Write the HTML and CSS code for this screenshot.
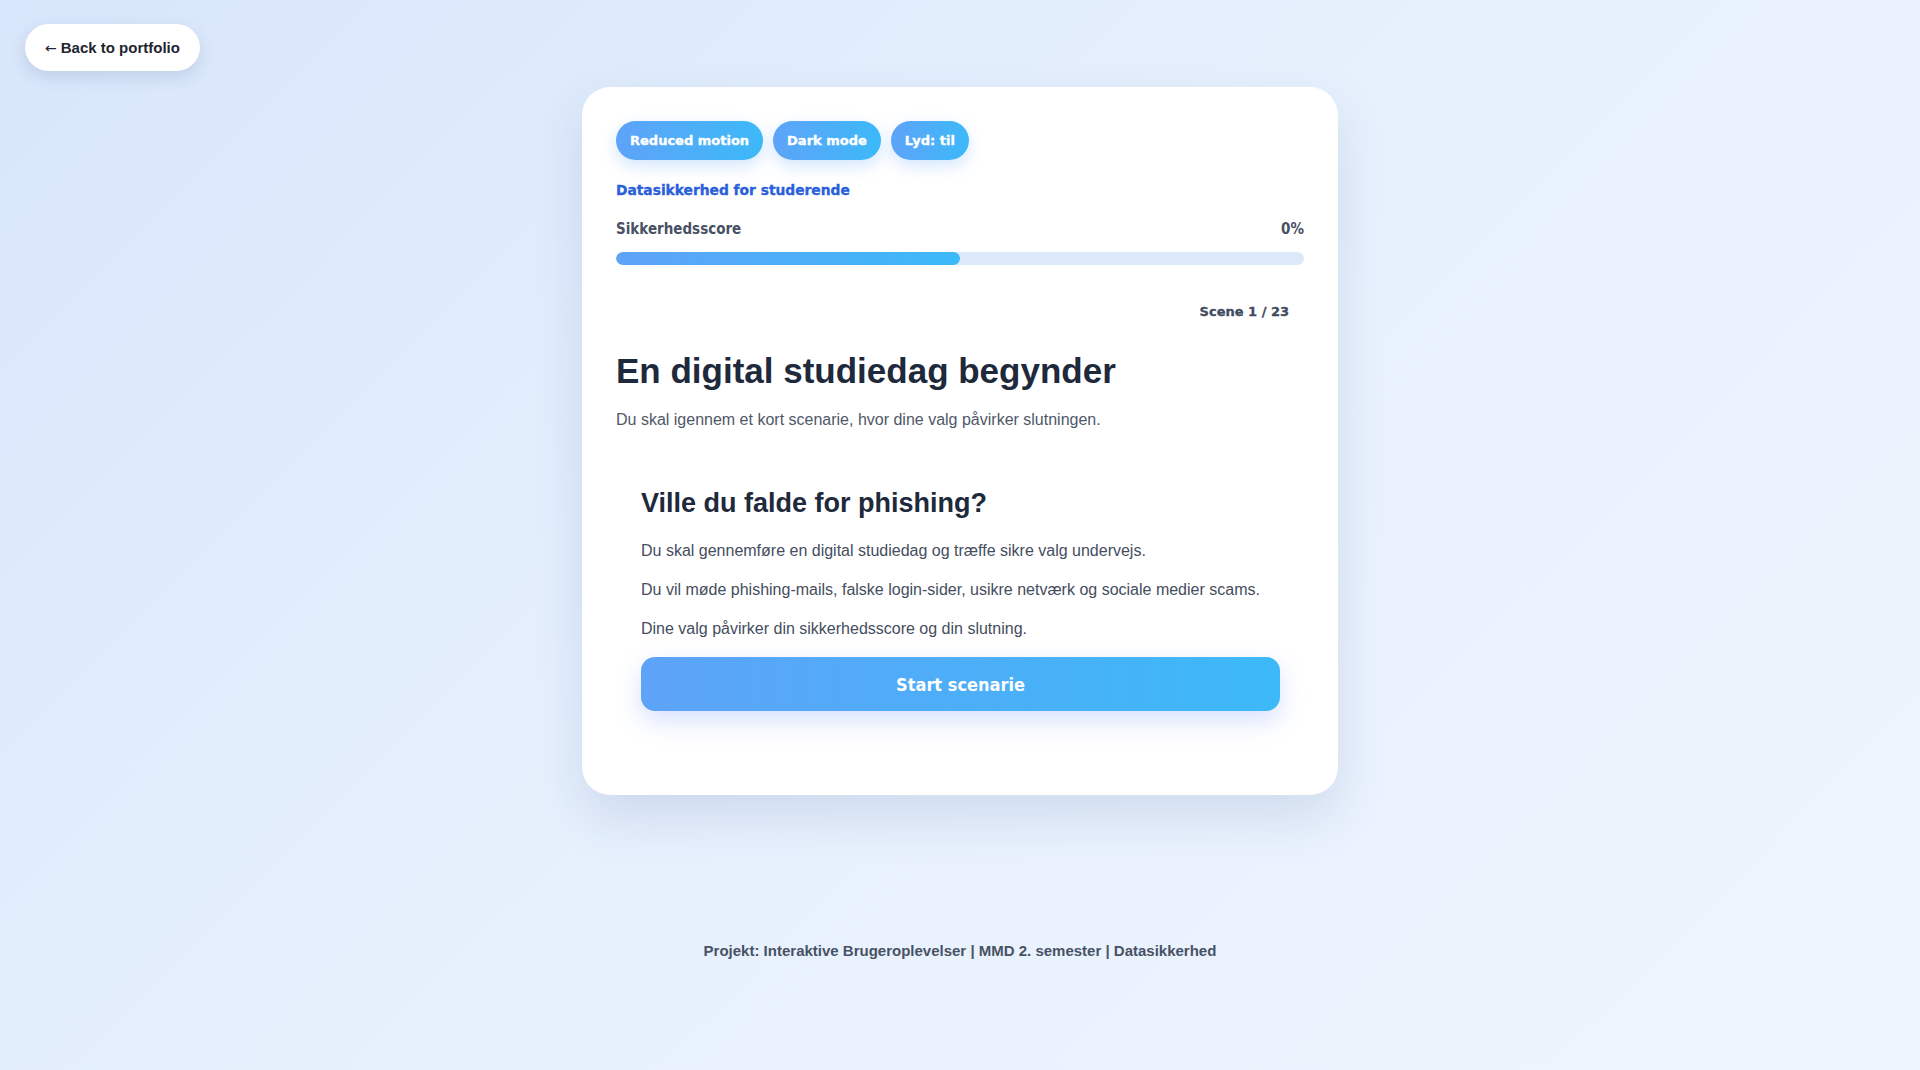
FILE: index.html
```html
<!DOCTYPE html>
<html lang="da">
<head>
<meta charset="utf-8">
<title>Datasikkerhed for studerende</title>
<link rel="stylesheet" href="styles.css">
</head>
<body>
<div class="page">
  <a class="back" href="#"><span class="arrow">←</span> Back to portfolio</a>
  <main class="card">
    <div class="toggles">
      <button class="pill">Reduced motion</button>
      <button class="pill">Dark mode</button>
      <button class="pill">Lyd: til</button>
    </div>
    <p class="eyebrow">Datasikkerhed for studerende</p>
    <div class="score-row">
      <span>Sikkerhedsscore</span>
      <span>0%</span>
    </div>
    <div class="bar"><div class="fill" style="width: 50%"></div></div>
    <p class="scene">Scene 1 / 23</p>
    <h1 class="title">En digital studiedag begynder</h1>
    <p class="subtitle">Du skal igennem et kort scenarie, hvor dine valg påvirker slutningen.</p>
    <section class="intro">
      <h2 class="intro-title">Ville du falde for phishing?</h2>
      <p class="intro-text">Du skal gennemføre en digital studiedag og træffe sikre valg undervejs.</p>
      <p class="intro-text">Du vil møde phishing-mails, falske login-sider, usikre netværk og sociale medier scams.</p>
      <p class="intro-text">Dine valg påvirker din sikkerhedsscore og din slutning.</p>
      <button class="start">Start scenarie</button>
    </section>
  </main>
  <footer class="footer">Projekt: Interaktive Brugeroplevelser | MMD 2. semester | Datasikkerhed</footer>
</div>
</body>
</html>
```

FILE: styles.css
```css
* { box-sizing: border-box; }
html, body { margin: 0; padding: 0; }
body {
  min-height: 1070px;
  font-family: "Liberation Sans", Arial, sans-serif;
  background: linear-gradient(135deg, #d8e6fb 0%, #e6f0fd 45%, #eef5fe 100%);
  color: #1e293b;
}
.page {
  padding: 24px 25px 0;
  min-height: 1070px;
}
.back {
  display: inline-flex;
  align-items: center;
  height: 47px;
  padding: 0 20px;
  background: #fff;
  border-radius: 24px;
  box-shadow: 0 6px 16px rgba(40, 60, 100, 0.14);
  color: #1f2430;
  font-weight: bold;
  font-size: 15px;
  text-decoration: none;
}
.arrow {
  font-family: "DejaVu Sans", sans-serif;
  font-weight: normal;
  font-size: 14px;
  margin-right: 4px;
}
.card {
  width: 756px;
  margin: 16px auto 0;
  padding: 34px 34px;
  background: #fff;
  border-radius: 28px;
  box-shadow: 0 22px 50px rgba(40, 70, 130, 0.13);
}
.toggles {
  display: flex;
  gap: 10px;
}
.pill {
  height: 39px;
  padding: 0 14px;
  border: none;
  border-radius: 20px;
  background: linear-gradient(90deg, #5ea3f8, #3cb9f8);
  color: #fff;
  font-family: "DejaVu Sans", sans-serif;
  font-weight: bold;
  font-size: 13px;
  -webkit-text-stroke: 0.35px #fff;
  box-shadow: 0 6px 16px rgba(96, 165, 250, 0.28);
}
.eyebrow {
  margin: 22px 0 0;
  font-family: "DejaVu Sans", sans-serif;
  font-weight: bold;
  font-size: 13.8px;
  line-height: 16px;
  color: #2a60da;
  -webkit-text-stroke: 0.35px #2a60da;
}
.score-row {
  margin-top: 22px;
  display: flex;
  justify-content: space-between;
  font-family: "Liberation Sans Narrow", "DejaVu Sans Condensed", sans-serif;
  font-weight: bold;
  font-size: 15px;
  line-height: 18px;
  color: #485063;
}
.bar {
  margin-top: 14px;
  height: 13px;
  border-radius: 7px;
  background: #dce9fb;
  overflow: hidden;
}
.fill {
  height: 100%;
  border-radius: 7px;
  background: linear-gradient(90deg, #5ea3f8, #3cb9f8);
}
.scene {
  margin: 39px 0 0;
  padding-right: 15px;
  text-align: right;
  font-family: "DejaVu Sans", sans-serif;
  font-weight: bold;
  font-size: 13px;
  line-height: 16px;
  color: #3f4a5e;
  -webkit-text-stroke: 0.3px #3f4a5e;
}
.title {
  margin: 30px 0 0;
  font-size: 35px;
  line-height: 42px;
  font-weight: bold;
  color: #1e293b;
}
.subtitle {
  margin: 16px 0 0;
  font-size: 16px;
  line-height: 24px;
  color: #4f5868;
}
.intro {
  margin: 31px 0 26px;
  padding: 24px 24px 24px 25px;
}
.intro-title {
  margin: 0 0 20px;
  font-size: 27px;
  line-height: 32px;
  font-weight: bold;
  color: #1e293b;
}
.intro-text {
  margin: 0 0 15px;
  font-size: 16px;
  line-height: 24px;
  color: #454d5e;
}
.start {
  display: block;
  width: 100%;
  height: 54px;
  margin-top: 16px;
  border: none;
  border-radius: 14px;
  background: linear-gradient(90deg, #5ea3f8, #3cb9f8);
  color: #fff;
  font-family: "Liberation Sans Narrow", "DejaVu Sans Condensed", sans-serif;
  font-weight: bold;
  font-size: 18px;
  box-shadow: 0 10px 24px rgba(96, 140, 250, 0.25);
}
.footer {
  margin-top: 148px;
  text-align: center;
  font-weight: bold;
  font-size: 15px;
  line-height: 16px;
  color: #485265;
}
```
